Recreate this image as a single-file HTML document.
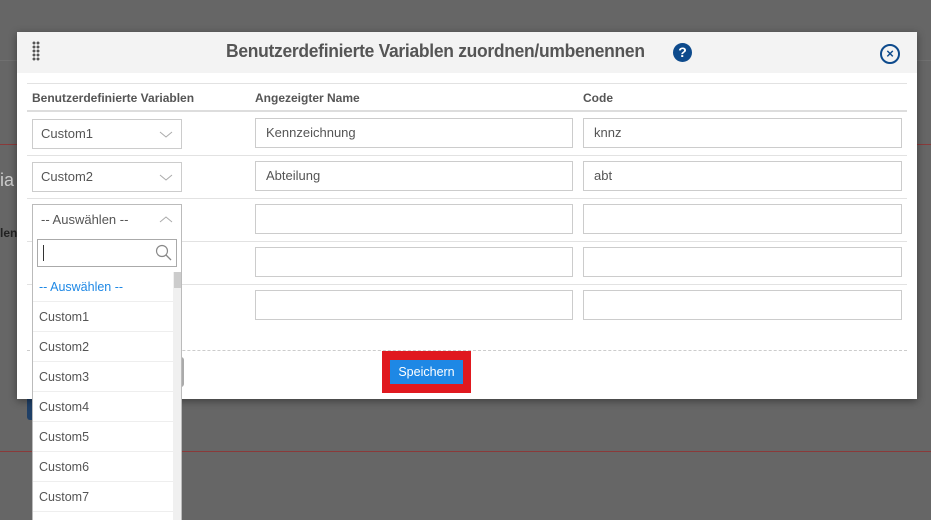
<!DOCTYPE html>
<html style="width:931px;height:520px;overflow:hidden"><head><meta charset="utf-8"><style>
*{box-sizing:border-box;margin:0;padding:0}
body{width:931px;height:520px;overflow:hidden;background:#666;font-family:"Liberation Sans",sans-serif;position:relative;font-size:13px;color:#555}
.a{position:absolute}
.inp{position:absolute;border:1px solid #ccc;background:#fff;height:30px;padding-left:10px;line-height:28px;font-size:13px;color:#555}
.line{position:absolute;left:27px;width:880px;height:1px;background:#e2e2e2}
.item{height:30px;line-height:30px;padding-left:6px;border-bottom:1px solid #eee;font-size:12.5px;color:#555}
</style></head><body>
<div class="a" style="left:0;top:144px;width:931px;height:1px;background:#8a3a3a"></div>
<div class="a" style="left:0;top:451px;width:931px;height:1px;background:#8a3a3a"></div>
<div class="a" style="left:0;top:60px;width:931px;height:1px;background:#707070"></div>
<div class="a" style="left:27px;top:390px;width:10px;height:30px;background:#1f3f66;border-radius:3px"></div>
<div class="a" style="left:0;top:170px;color:#ccc;font-size:18px">ia</div>
<div class="a" style="left:0;top:226px;color:#222;font-size:12px;font-weight:bold">len</div>

<div class="a" style="left:17px;top:32px;width:900px;height:367px;background:#fff;box-shadow:0 2px 8px rgba(0,0,0,.4)">
  <div class="a" style="left:0;top:0;width:900px;height:41px;background:#f3f3f3"></div>
  <div class="a" style="left:15px;top:9px;width:8px;height:20px;background:radial-gradient(circle,#555 1.3px,transparent 1.6px) 0 0/4px 4px"></div>
  <div class="a" style="left:209px;top:9px;font-size:18px;font-weight:bold;color:#555;letter-spacing:-0.3px;transform:scaleX(0.97);transform-origin:left">Benutzerdefinierte Variablen zuordnen/umbenennen</div>
  <div class="a" style="left:656px;top:11px;width:19px;height:19px;border-radius:50%;background:#0d4a8c;color:#fff;font-weight:bold;font-size:14px;text-align:center;line-height:19px">?</div>
  <div class="a" style="left:863px;top:12px;width:20px;height:20px;border-radius:50%;border:2px solid #0d4a8c;color:#0d4a8c;font-weight:bold;font-size:13px;text-align:center;line-height:16px">×</div>
</div>
<div class="line" style="top:83px"></div>
<div class="line" style="top:110px;height:2px;background:#ddd"></div>
<div class="line" style="top:155px"></div>
<div class="line" style="top:198px"></div>
<div class="line" style="top:241px"></div>
<div class="line" style="top:284px"></div>
<div class="a" style="left:27px;top:350px;width:880px;border-top:1px dashed #ccc"></div>
<div class="a" style="left:32px;top:91px;font-size:12px;font-weight:bold;color:#555">Benutzerdefinierte Variablen</div>
<div class="a" style="left:255px;top:91px;font-size:12px;font-weight:bold;color:#555">Angezeigter Name</div>
<div class="a" style="left:583px;top:91px;font-size:12px;font-weight:bold;color:#555">Code</div>

<div class="inp" style="left:32px;top:119px;width:150px;padding-left:8px">Custom1<svg class="a" style="left:126px;top:10px" width="14" height="9"><path d="M1 2 L7 7 L13 2" fill="none" stroke="#aaa" stroke-width="1"/></svg></div>
<div class="inp" style="left:32px;top:162px;width:150px;padding-left:8px">Custom2<svg class="a" style="left:126px;top:10px" width="14" height="9"><path d="M1 2 L7 7 L13 2" fill="none" stroke="#aaa" stroke-width="1"/></svg></div>
<div class="inp" style="left:255px;top:118px;width:318px">Kennzeichnung</div>
<div class="inp" style="left:255px;top:161px;width:318px">Abteilung</div>
<div class="inp" style="left:255px;top:204px;width:318px"></div>
<div class="inp" style="left:255px;top:247px;width:318px"></div>
<div class="inp" style="left:255px;top:290px;width:318px"></div>
<div class="inp" style="left:583px;top:118px;width:319px">knnz</div>
<div class="inp" style="left:583px;top:161px;width:319px">abt</div>
<div class="inp" style="left:583px;top:204px;width:319px"></div>
<div class="inp" style="left:583px;top:247px;width:319px"></div>
<div class="inp" style="left:583px;top:290px;width:319px"></div>

<div class="a" style="left:170px;top:357px;width:14px;height:30px;background:#aaa;border-radius:3px"></div>
<div class="a" style="left:382px;top:351px;width:89px;height:42px;background:#e0191f"></div>
<div class="a" style="left:390px;top:360px;width:73px;height:24px;background:#1e88e5;color:#fff;font-size:12.5px;text-align:center;line-height:24px">Speichern</div>

<div class="a" style="left:32px;top:204px;width:150px;height:316px;background:#fff;border:1px solid #bbb;border-bottom:none;overflow:hidden">
  <div style="height:30px;line-height:30px;padding-left:8px">-- Auswählen --<svg class="a" style="left:126px;top:10px" width="14" height="9"><path d="M1 7 L7 2 L13 7" fill="none" stroke="#aaa" stroke-width="1"/></svg></div>
  <div class="a" style="left:4px;top:34px;width:140px;height:28px;border:1px solid #aaa">
    <div class="a" style="left:5px;top:5px;width:1px;height:16px;background:#333"></div>
    <svg class="a" style="left:117px;top:4px" width="18" height="18"><circle cx="7" cy="7" r="5.5" fill="none" stroke="#888" stroke-width="1.2"/><line x1="11" y1="11" x2="16" y2="16" stroke="#888" stroke-width="1.3"/></svg>
  </div>
  <div class="a" style="left:0;top:67px;width:140px">
    <div class="item" style="color:#1e88e5">-- Auswählen --</div>
    <div class="item">Custom1</div><div class="item">Custom2</div><div class="item">Custom3</div><div class="item">Custom4</div><div class="item">Custom5</div><div class="item">Custom6</div><div class="item">Custom7</div>
  </div>
  <div class="a" style="left:140px;top:67px;width:9px;height:250px;background:#f0f0f0"><div style="margin:0 1px;height:16px;background:#ccc"></div></div>
</div>
</body></html>
